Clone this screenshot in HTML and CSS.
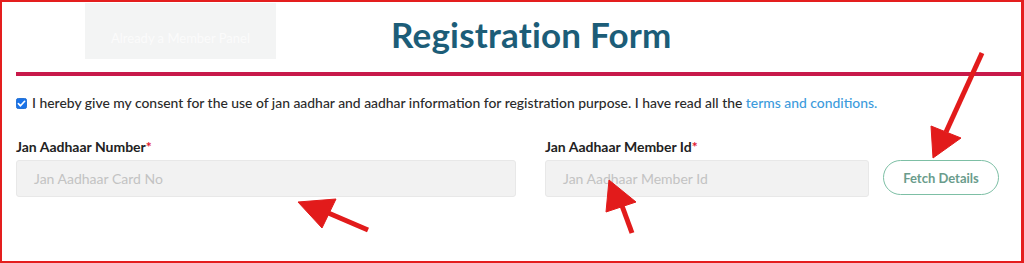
FILE: index.html
```html
<!DOCTYPE html>
<html>
<head>
<meta charset="utf-8">
<link rel="stylesheet" href="styles.css">
</head>
<body>
<div class="frame">
  <div class="header">
    <div class="ghost-btn">Already a Member Panel</div>
    <h1 class="title">Registration Form</h1>
  </div>
  <div class="content">
    <div class="consent">
      <span class="check"><svg viewBox="0 0 12 12" width="11" height="11"><rect x="0.5" y="0.5" width="11" height="11" rx="2" fill="#1a73e8" stroke="#1a6ad0"/><path d="M2.6 6.2 L4.9 8.5 L9.4 3.6" fill="none" stroke="#fff" stroke-width="1.8" stroke-linecap="round" stroke-linejoin="round"/></svg></span>
      <span>I hereby give my consent for the use of jan aadhar and aadhar information for registration purpose. I have read all the <a class="terms">terms and conditions.</a></span>
    </div>
    <div class="fields">
      <div class="field f1">
        <label class="lbl">Jan Aadhaar Number<span class="req">*</span></label>
        <div class="input">Jan Aadhaar Card No</div>
      </div>
      <div class="field f2">
        <label class="lbl">Jan Aadhaar Member Id<span class="req">*</span></label>
        <div class="input">Jan Aadhaar Member Id</div>
      </div>
      <div class="fetch">Fetch Details</div>
    </div>
  </div>
  <svg class="arrows" viewBox="0 0 1024 263" width="1024" height="263">
    <g fill="#e21b1b" stroke="#e21b1b">
      <line x1="982" y1="53" x2="946" y2="132" stroke-width="5"/>
      <polygon points="933,158 931,126 961,138" stroke-width="1"/>
      <line x1="368" y1="230" x2="326" y2="212" stroke-width="5"/>
      <polygon points="298,202 336,199 322,228" stroke-width="1"/>
      <line x1="632" y1="233" x2="621" y2="203" stroke-width="5"/>
      <polygon points="609,180 606,212 636,202" stroke-width="1"/>
    </g>
  </svg>
</div>
</body>
</html>
```

FILE: styles.css
```css
* { box-sizing: border-box; }
html, body { margin: 0; padding: 0; background: #fff; }
body { font-family: Lato, "Noto Sans", sans-serif; color: #222; }

.frame {
  position: relative;
  width: 1024px;
  height: 263px;
  border: 2px solid #e41e1e;
  border-right-width: 3px;
  overflow: hidden;
}

.header {
  display: flex;
  align-items: flex-start;
  margin-left: 14px;
  height: 74px;
  border-bottom: 4px solid #c8194a;
}

.ghost-btn {
  margin-left: 69px;
  margin-top: 1px;
  width: 191px;
  height: 56px;
  background: #f3f4f4;
  color: #fbfbfb;
  font-size: 13px;
  display: flex;
  align-items: center;
  justify-content: center;
  padding-top: 14px;
}

.title {
  margin: 12px 0 0 115px;
  font-family: Lato, sans-serif;
  font-weight: 700;
  font-size: 35px;
  line-height: 40px;
  color: #1c5d78;
  letter-spacing: 0.2px;
}

.content {
  padding: 19px 0 0 14px;
}

.consent {
  display: flex;
  align-items: center;
  gap: 5px;
  font-size: 13.9px;
  line-height: 16px;
  color: #2a2a2a;
  font-weight: 500;
}
.check { display: flex; }
.terms { color: #3c9bdc; }

.fields {
  display: flex;
  align-items: flex-end;
  margin-top: 28px;
}

.field { display: flex; flex-direction: column; }
.f1 { width: 500px; }
.f2 { width: 324px; margin-left: 29px; }

.lbl {
  font-size: 14px;
  line-height: 16px;
  font-weight: 700;
  color: #222;
  margin-bottom: 5px;
}
.req { color: #e0182d; }

.input {
  height: 37px;
  background: #f2f2f2;
  border: 1px solid #e8e8e8;
  border-radius: 3px;
  padding-left: 17px;
  display: flex;
  align-items: center;
  color: #c3c3c3;
  font-size: 14px;
}

.fetch {
  margin-left: 14px;
  margin-bottom: 2px;
  width: 116px;
  height: 35px;
  border: 1.5px solid #7dbfa5;
  border-radius: 18px;
  color: #6a9c8c;
  font-size: 13px;
  font-weight: 700;
  display: flex;
  align-items: center;
  justify-content: center;
}

.arrows {
  position: absolute;
  left: -2px;
  top: -2px;
  pointer-events: none;
}
```
